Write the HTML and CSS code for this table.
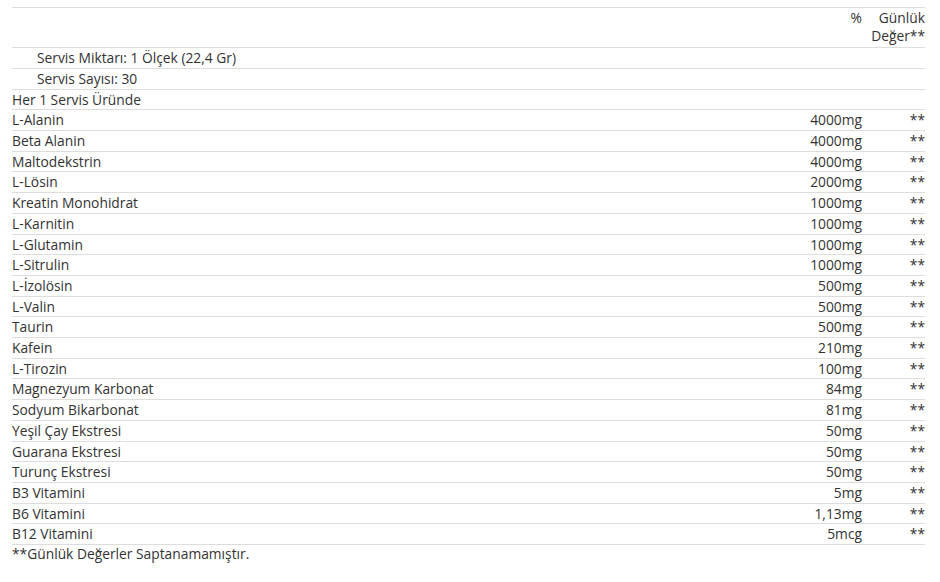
FILE: index.html
```html
<!DOCTYPE html>
<html lang="tr">
<head>
<meta charset="utf-8">
<link rel="stylesheet" href="styles.css">
</head>
<body>
<div class="wrap">
<table class="facts">
<thead>
<tr class="head"><th></th><th class="amt">%</th><th class="dv">Günlük Değer**</th></tr>
</thead>
<tbody>
<tr><td class="ind">Servis Miktarı: 1 Ölçek (22,4 Gr)</td><td></td><td></td></tr>
<tr><td class="ind">Servis Sayısı: 30</td><td></td><td></td></tr>
<tr><td>Her 1 Servis Üründe</td><td></td><td></td></tr>
<tr><td>L-Alanin</td><td class="amt">4000mg</td><td class="dv">**</td></tr>
<tr><td>Beta Alanin</td><td class="amt">4000mg</td><td class="dv">**</td></tr>
<tr><td>Maltodekstrin</td><td class="amt">4000mg</td><td class="dv">**</td></tr>
<tr><td>L-Lösin</td><td class="amt">2000mg</td><td class="dv">**</td></tr>
<tr><td>Kreatin Monohidrat</td><td class="amt">1000mg</td><td class="dv">**</td></tr>
<tr><td>L-Karnitin</td><td class="amt">1000mg</td><td class="dv">**</td></tr>
<tr><td>L-Glutamin</td><td class="amt">1000mg</td><td class="dv">**</td></tr>
<tr><td>L-Sitrulin</td><td class="amt">1000mg</td><td class="dv">**</td></tr>
<tr><td>L-İzolösin</td><td class="amt">500mg</td><td class="dv">**</td></tr>
<tr><td>L-Valin</td><td class="amt">500mg</td><td class="dv">**</td></tr>
<tr><td>Taurin</td><td class="amt">500mg</td><td class="dv">**</td></tr>
<tr><td>Kafein</td><td class="amt">210mg</td><td class="dv">**</td></tr>
<tr><td>L-Tirozin</td><td class="amt">100mg</td><td class="dv">**</td></tr>
<tr><td>Magnezyum Karbonat</td><td class="amt">84mg</td><td class="dv">**</td></tr>
<tr><td>Sodyum Bikarbonat</td><td class="amt">81mg</td><td class="dv">**</td></tr>
<tr><td>Yeşil Çay Ekstresi</td><td class="amt">50mg</td><td class="dv">**</td></tr>
<tr><td>Guarana Ekstresi</td><td class="amt">50mg</td><td class="dv">**</td></tr>
<tr><td>Turunç Ekstresi</td><td class="amt">50mg</td><td class="dv">**</td></tr>
<tr><td>B3 Vitamini</td><td class="amt">5mg</td><td class="dv">**</td></tr>
<tr><td>B6 Vitamini</td><td class="amt">1,13mg</td><td class="dv">**</td></tr>
<tr class="last"><td>B12 Vitamini</td><td class="amt">5mcg</td><td class="dv">**</td></tr>
</tbody>
</table>
<p class="note">**Günlük Değerler Saptanamamıştır.</p>
</div>
</body>
</html>
```
FILE: styles.css
```css
html, body {
  margin: 0;
  padding: 0;
  background: #fff;
}
body {
  font-family: "Open Sans", "DejaVu Sans", sans-serif;
  font-size: 13.8px;
  color: #333;
}
.wrap {
  padding: 7px 15px 0 12px;
}
.facts {
  width: 100%;
  border-collapse: collapse;
  border-bottom: 1px solid #ddd;
}
.facts th,
.facts td {
  box-sizing: border-box;
  padding: 1px 0;
  border-top: 1px solid #ddd;
  line-height: 17.7px;
  font-weight: normal;
  text-align: left;
  vertical-align: top;
}
.facts .head th {
  padding: 1px 0 3px;
  line-height: 17.6px;
}
.facts .amt {
  text-align: right;
  width: 120px;
}
.facts .dv {
  text-align: right;
  width: 63px;
}
.facts .ind {
  padding-left: 25px;
}
.note {
  margin: 0;
  padding-top: 0;
  line-height: 17.7px;
}
```
